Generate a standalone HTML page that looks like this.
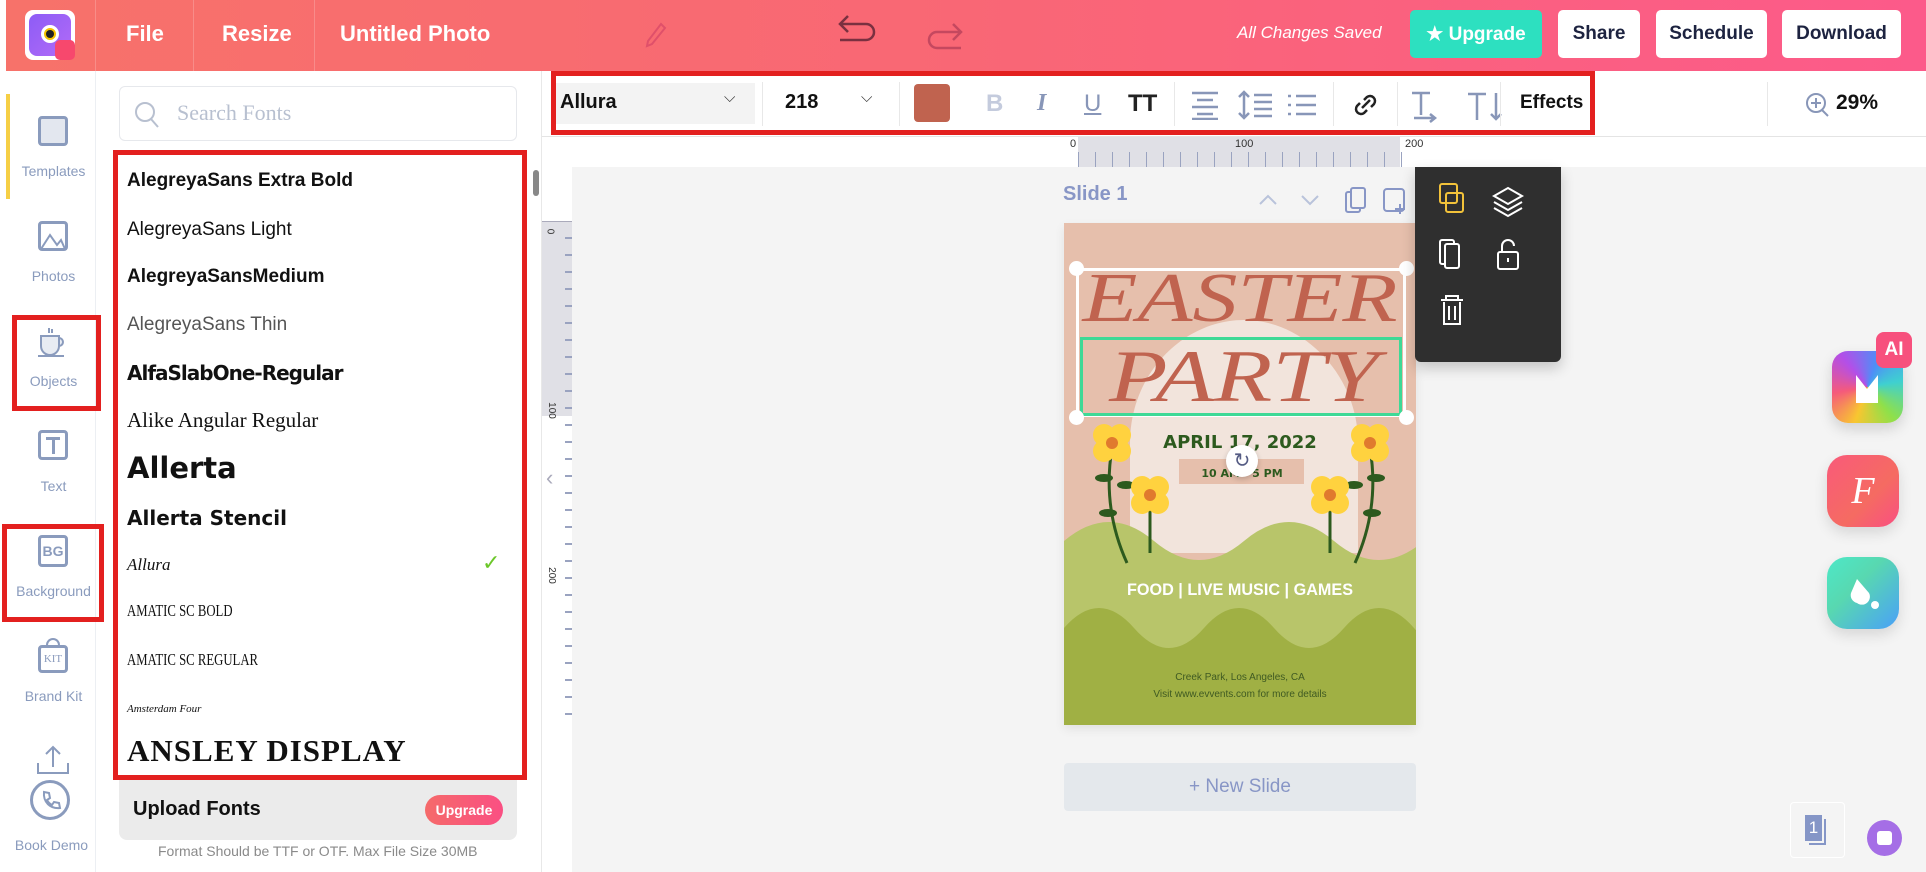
<!DOCTYPE html>
<html><head><meta charset="utf-8">
<style>
*{box-sizing:border-box;margin:0;padding:0}
body{width:1926px;height:872px;overflow:hidden;background:#fff;font-family:"Liberation Sans",sans-serif;position:relative}
.a{position:absolute}
.top{left:6px;top:0;width:1920px;height:71px;background:linear-gradient(90deg,#f7726a 0%,#f96775 50%,#fc5a8a 100%)}
.tb{color:#fff;font-weight:bold;font-size:22px;top:21px}
.btn{top:10px;height:48px;background:#fff;border-radius:5px;color:#1d2340;font-weight:bold;font-size:19px;display:flex;align-items:center;justify-content:center}
.side{color:#8a9bbd;font-size:14px;text-align:center;width:95px;left:6px}
.ic{border:3px solid #8a9bbd;border-radius:4px}
.f{left:127px;color:#111;white-space:nowrap}
.rb{border:5px solid #e3201f}
.ti{top:90px;font-size:24px;color:#8896b8}
</style></head><body>
<div class="a top"></div>
<div class="a" style="left:25px;top:10px;width:50px;height:50px;background:#fff;border-radius:8px"></div>
<div class="a" style="left:29px;top:14px;width:42px;height:42px;background:linear-gradient(135deg,#8d5cf6,#b26bf7);border-radius:8px"></div>
<div class="a" style="left:41px;top:25px;width:18px;height:18px;background:#f6c200;border-radius:50%;border:3px solid #fff"></div>
<div class="a" style="left:46px;top:30px;width:8px;height:8px;background:#222;border-radius:50%"></div>
<div class="a" style="left:55px;top:40px;width:20px;height:20px;background:#f7486d;border-radius:5px"></div>
<div class="a" style="left:95px;top:0;width:1px;height:71px;background:rgba(255,255,255,.2)"></div>
<div class="a" style="left:193px;top:0;width:1px;height:71px;background:rgba(255,255,255,.2)"></div>
<div class="a" style="left:314px;top:0;width:1px;height:71px;background:rgba(255,255,255,.2)"></div>
<div class="a tb" style="left:126px">File</div>
<div class="a tb" style="left:222px">Resize</div>
<div class="a tb" style="left:340px">Untitled Photo</div>
<svg class="a" style="left:645px;top:22px" width="22" height="26" viewBox="0 0 22 26"><path d="M16 2l4 4L7 22l-5 2 1-5z" fill="none" stroke="#e0506a" stroke-width="2"/></svg>
<svg class="a" style="left:836px;top:14px" width="44" height="32" viewBox="0 0 44 32"><path d="M4 10h26a8 8 0 010 16H4M12 2L4 10l8 8" fill="none" stroke="#7a3040" stroke-width="2.5"/></svg>
<svg class="a" style="left:925px;top:18px" width="44" height="32" viewBox="0 0 44 32"><path d="M36 14H12a8 8 0 000 16h24M28 6l8 8-8 8" fill="none" stroke="#c5485f" stroke-width="2.5"/></svg>
<div class="a" style="left:1237px;top:23px;color:#fff;font-style:italic;font-size:17px">All Changes Saved</div>
<div class="a btn" style="left:1410px;width:132px;background:#2de0c0;color:#fff">★&nbsp;Upgrade</div>
<div class="a btn" style="left:1558px;width:82px">Share</div>
<div class="a btn" style="left:1656px;width:111px">Schedule</div>
<div class="a btn" style="left:1782px;width:119px">Download</div>

<div class="a" style="left:95px;top:71px;width:1px;height:801px;background:#eceff3"></div>
<div class="a" style="left:6px;top:94px;width:4px;height:105px;background:#f6cf45"></div>
<div class="a ic" style="left:38px;top:116px;width:30px;height:30px;background:#e3e7ef"></div>
<div class="a side" style="top:163px">Templates</div>
<div class="a ic" style="left:38px;top:221px;width:30px;height:30px"></div>
<svg class="a" style="left:40px;top:228px" width="26" height="22"><path d="M1 21l9-14 7 10 4-5 4 9" fill="none" stroke="#8a9bbd" stroke-width="2"/></svg>
<div class="a side" style="top:268px">Photos</div>
<div class="a rb" style="left:12px;top:315px;width:89px;height:96px"></div>
<svg class="a" style="left:36px;top:326px" width="34" height="32"><path d="M5 10h18v10a9 9 0 01-18 0zM23 12a4 4 0 010 8M2 30h26M13 2v5M16 3v4" fill="#e8ecf3" stroke="#8a9bbd" stroke-width="2"/></svg>
<div class="a side" style="top:373px">Objects</div>
<div class="a ic" style="left:38px;top:430px;width:30px;height:30px"></div>
<div class="a" style="left:46px;top:437px;width:14px;height:3px;background:#8a9bbd"></div>
<div class="a" style="left:52px;top:437px;width:3px;height:17px;background:#8a9bbd"></div>
<div class="a side" style="top:478px">Text</div>
<div class="a rb" style="left:2px;top:524px;width:102px;height:98px"></div>
<div class="a ic" style="left:38px;top:535px;width:30px;height:32px;color:#8a9bbd;font-size:14px;font-weight:bold;text-align:center;line-height:26px">BG</div>
<div class="a side" style="top:583px">Background</div>
<div class="a ic" style="left:38px;top:645px;width:30px;height:28px;color:#8a9bbd;font-size:11px;text-align:center;line-height:22px;font-family:'Liberation Serif',serif">KIT</div>
<div class="a" style="left:46px;top:638px;width:14px;height:10px;border:2px solid #8a9bbd;border-bottom:none;border-radius:7px 7px 0 0"></div>
<div class="a side" style="top:688px">Brand Kit</div>
<svg class="a" style="left:36px;top:745px" width="34" height="30"><path d="M17 2v20M10 9l7-7 7 7M2 18v10h30V18" fill="none" stroke="#8a9bbd" stroke-width="2"/></svg>
<div class="a" style="left:30px;top:780px;width:40px;height:40px;border:3px solid #8a9bbd;border-radius:50%"></div>
<svg class="a" style="left:40px;top:790px" width="22" height="22"><path d="M4 2l5 1 1 5-3 2a11 11 0 005 5l2-3 5 1 1 5c-10 1-17-6-16-16z" fill="none" stroke="#8a9bbd" stroke-width="2"/></svg>
<div class="a side" style="top:837px;left:4px">Book Demo</div>

<div class="a" style="left:541px;top:71px;width:1px;height:801px;background:#e8e8e8"></div>
<div class="a" style="left:119px;top:86px;width:398px;height:55px;border:1px solid #e6e8ec;border-radius:6px"></div>
<svg class="a" style="left:133px;top:100px" width="28" height="30"><circle cx="12" cy="12" r="9" fill="none" stroke="#b8c0d0" stroke-width="2"/><path d="M18 19l7 8" stroke="#b8c0d0" stroke-width="2"/></svg>
<div class="a" style="left:177px;top:100px;font-size:22px;color:#b8c0d0;font-family:'Liberation Serif',serif">Search Fonts</div>
<div class="a rb" style="left:113px;top:150px;width:414px;height:630px"></div>
<div class="a" style="left:533px;top:170px;width:6px;height:26px;background:#888;border-radius:3px"></div>
<div class="a f" style="top:170px;font-size:19px;font-weight:bold">AlegreyaSans Extra Bold</div>
<div class="a f" style="top:219px;font-size:19px">AlegreyaSans Light</div>
<div class="a f" style="top:266px;font-size:19px;font-weight:bold">AlegreyaSansMedium</div>
<div class="a f" style="top:314px;font-size:19px;color:#555">AlegreyaSans Thin</div>
<div class="a f" style="top:361px;font-size:20px;font-weight:900;font-family:'DejaVu Sans',sans-serif;letter-spacing:-1px">AlfaSlabOne-Regular</div>
<div class="a f" style="top:408px;font-size:21px;font-family:'Liberation Serif',serif">Alike Angular Regular</div>
<div class="a f" style="top:451px;font-size:29px;font-weight:bold;font-family:'DejaVu Sans',sans-serif">Allerta</div>
<div class="a f" style="top:506px;font-size:20px;font-weight:bold;font-family:'DejaVu Sans',sans-serif">Allerta Stencil</div>
<div class="a f" style="top:555px;font-size:17px;font-style:italic;font-family:'Liberation Serif',serif">Allura</div>
<div class="a" style="left:482px;top:550px;color:#6cc72a;font-size:22px">✓</div>
<div class="a f" style="top:601px;font-size:17px;font-family:'Liberation Serif',serif;transform:scaleX(.75);transform-origin:left">AMATIC SC BOLD</div>
<div class="a f" style="top:650px;font-size:17px;font-family:'Liberation Serif',serif;transform:scaleX(.75);transform-origin:left">AMATIC SC REGULAR</div>
<div class="a f" style="top:703px;font-size:11px;font-style:italic;font-family:'Liberation Serif',serif">Amsterdam Four</div>
<div class="a f" style="top:733px;font-size:31px;font-weight:bold;font-family:'Liberation Serif',serif;letter-spacing:1px">ANSLEY DISPLAY</div>
<div class="a" style="left:119px;top:780px;width:398px;height:60px;background:#ebebeb;border-radius:0 0 8px 8px"></div>
<div class="a" style="left:133px;top:798px;font-size:20px;font-weight:bold;color:#111">Upload Fonts</div>
<div class="a" style="left:425px;top:795px;width:78px;height:30px;background:linear-gradient(90deg,#f56a6a,#fa4f83);border-radius:15px;color:#fff;font-size:14px;font-weight:bold;text-align:center;line-height:30px">Upgrade</div>
<div class="a" style="left:158px;top:843px;font-size:14px;color:#8a8a8a">Format Should be TTF or OTF. Max File Size 30MB</div>

<div class="a" style="left:572px;top:167px;width:1354px;height:705px;background:#f4f4f4"></div>
<div class="a" style="left:542px;top:136px;width:1384px;height:1px;background:#e4e4e4"></div>
<div class="a" style="left:542px;top:221px;width:30px;height:195px;background:#e0e0e6"></div>
<div class="a" style="left:542px;top:221px;width:30px;height:1px;background:#aab"></div>
<div class="a" style="left:547px;top:226px;font-size:10px;color:#333;transform:rotate(90deg)">0</div>
<div class="a" style="left:543px;top:405px;font-size:10px;color:#333;transform:rotate(90deg)">100</div>
<div class="a" style="left:543px;top:570px;font-size:10px;color:#333;transform:rotate(90deg)">200</div>
<div class="a" style="left:565px;top:222px;width:7px;height:500px;background:repeating-linear-gradient(180deg,transparent 0 15px,#9aa3c0 15px 17px)"></div>
<div class="a" style="left:546px;top:465px;color:#aab;font-size:22px">‹</div>
<div class="a" style="left:1064px;top:137px;width:18px;height:30px;background:#fff"></div>
<div class="a" style="left:1078px;top:137px;width:322px;height:30px;background:#e0e0e6"></div>
<div class="a" style="left:1078px;top:152px;width:330px;height:15px;background:repeating-linear-gradient(90deg,#9aa3c0 0 1px,transparent 1px 17px)"></div>
<div class="a" style="left:1070px;top:138px;font-size:11px;color:#333">0</div>
<div class="a" style="left:1235px;top:138px;font-size:11px;color:#333">100</div>
<div class="a" style="left:1405px;top:138px;font-size:11px;color:#333">200</div>
<div class="a" style="left:1063px;top:183px;font-size:20px;font-weight:bold;color:#8896c6">Slide 1</div>
<svg class="a" style="left:1258px;top:186px" width="160" height="30"><path d="M2 18l8-8 8 8M44 10l8 8 8-8" fill="none" stroke="#b9c3db" stroke-width="2"/><rect x="88" y="6" width="14" height="20" rx="2" fill="none" stroke="#8896c6" stroke-width="2"/><rect x="93" y="2" width="14" height="20" rx="2" fill="#f4f4f4" stroke="#8896c6" stroke-width="2"/><rect x="126" y="3" width="20" height="22" rx="3" fill="none" stroke="#8896c6" stroke-width="2"/><path d="M142 18v10M137 23h10" stroke="#8896c6" stroke-width="2"/></svg>

<svg class="a" style="left:1064px;top:223px;box-shadow:0 4px 10px rgba(0,0,0,.08)" width="352" height="502" viewBox="0 0 352 502">
<rect width="352" height="502" fill="#e6bfac"/>
<path d="M66 330V220C66 150 120 97 180 97s114 55 114 123v110z" fill="#f2e4dc"/>
<path d="M0 318 Q45 280 90 318 T180 318 T270 318 T360 318 V502 H0Z" fill="#b8c56a"/>
<path d="M0 405 Q35 365 70 405 T140 405 T210 405 T280 405 T350 405 T420 405 V502 H0Z" fill="#a0b044"/>
<text x="176" y="98" text-anchor="middle" font-family="Liberation Serif" font-style="italic" font-size="70" fill="#c0634f" textLength="315" lengthAdjust="spacingAndGlyphs">EASTER</text>
<text x="180" y="178" text-anchor="middle" font-family="Liberation Serif" font-style="italic" font-size="74" fill="#c0634f" textLength="270" lengthAdjust="spacingAndGlyphs">PARTY</text>
<text x="176" y="225" text-anchor="middle" font-family="DejaVu Sans" font-weight="bold" font-size="18" fill="#2d5a1e">APRIL 17, 2022</text>
<rect x="115" y="236" width="125" height="25" fill="#e6bfac"/>
<text x="178" y="254" text-anchor="middle" font-family="DejaVu Sans" font-weight="bold" font-size="11" fill="#2d5a1e">10 AM - 5 PM</text>
<g stroke="#2d5a1e" stroke-width="3" fill="none"><path d="M48 225q-10 60 15 115M306 225q10 60-15 115M86 280v50M266 280v50"/></g>
<g fill="#2d5a1e"><ellipse cx="40" cy="255" rx="9" ry="4"/><ellipse cx="62" cy="262" rx="9" ry="4"/><ellipse cx="44" cy="290" rx="9" ry="4"/><ellipse cx="312" cy="255" rx="9" ry="4"/><ellipse cx="290" cy="262" rx="9" ry="4"/><ellipse cx="308" cy="290" rx="9" ry="4"/></g>
<g fill="#ffd23f"><circle cx="40" cy="212" r="11"/><circle cx="56" cy="212" r="11"/><circle cx="40" cy="228" r="11"/><circle cx="56" cy="228" r="11"/><circle cx="78" cy="264" r="11"/><circle cx="94" cy="264" r="11"/><circle cx="78" cy="280" r="11"/><circle cx="94" cy="280" r="11"/><circle cx="298" cy="212" r="11"/><circle cx="314" cy="212" r="11"/><circle cx="298" cy="228" r="11"/><circle cx="314" cy="228" r="11"/><circle cx="258" cy="264" r="11"/><circle cx="274" cy="264" r="11"/><circle cx="258" cy="280" r="11"/><circle cx="274" cy="280" r="11"/></g>
<g fill="#e07a2e"><circle cx="48" cy="220" r="6"/><circle cx="86" cy="272" r="6"/><circle cx="306" cy="220" r="6"/><circle cx="266" cy="272" r="6"/></g>
<text x="176" y="372" text-anchor="middle" font-family="Liberation Sans" font-weight="bold" font-size="17" fill="#fff" textLength="226" lengthAdjust="spacingAndGlyphs">FOOD | LIVE MUSIC | GAMES</text>
<text x="176" y="457" text-anchor="middle" font-family="Liberation Sans" font-size="10" fill="#3f5a22">Creek Park, Los Angeles, CA</text>
<text x="176" y="474" text-anchor="middle" font-family="Liberation Sans" font-size="10" fill="#3f5a22">Visit www.evvents.com for more details</text>
</svg>
<div class="a" style="left:1076px;top:268px;width:330px;height:149px;border:3px solid #fff"></div>
<div class="a" style="left:1080px;top:337px;width:322px;height:79px;border:3px solid #3ed996"></div>
<div class="a" style="left:1069px;top:261px;width:15px;height:15px;background:#fff;border-radius:50%"></div>
<div class="a" style="left:1399px;top:261px;width:15px;height:15px;background:#fff;border-radius:50%"></div>
<div class="a" style="left:1069px;top:410px;width:15px;height:15px;background:#fff;border-radius:50%"></div>
<div class="a" style="left:1399px;top:410px;width:15px;height:15px;background:#fff;border-radius:50%"></div>
<div class="a" style="left:1226px;top:445px;width:32px;height:32px;background:#fff;border-radius:50%;box-shadow:0 2px 6px rgba(0,0,0,.2);color:#555c84;text-align:center;line-height:32px;font-size:20px">↻</div>
<div class="a" style="left:1415px;top:167px;width:146px;height:195px;background:#2f2f2f;border-radius:0 0 6px 6px;box-shadow:0 6px 14px rgba(0,0,0,.2)"></div>
<svg class="a" style="left:1436px;top:180px" width="110" height="150">
<rect x="4" y="4" width="17" height="19" rx="2" fill="none" stroke="#f2c23a" stroke-width="2"/><rect x="10" y="13" width="17" height="19" rx="2" fill="none" stroke="#f2c23a" stroke-width="2"/>
<path d="M72 8l14 8-14 8-14-8zM58 22l14 8 14-8M58 28l14 8 14-8" fill="none" stroke="#fff" stroke-width="2"/>
<rect x="4" y="60" width="14" height="24" rx="2" fill="none" stroke="#fff" stroke-width="2"/><rect x="9" y="64" width="14" height="24" rx="2" fill="#2f2f2f" stroke="#fff" stroke-width="2"/>
<rect x="62" y="72" width="20" height="17" rx="2" fill="none" stroke="#fff" stroke-width="2"/><path d="M66 72v-6a6 6 0 0112 0M72 78v4" fill="none" stroke="#fff" stroke-width="2"/>
<path d="M5 120h22M10 120v-4h12v4M8 122v22h16V122M13 126v14M19 126v14" fill="none" stroke="#fff" stroke-width="2"/>
</svg>
<div class="a" style="left:1064px;top:763px;width:352px;height:48px;background:#e4e8ec;border-radius:4px;color:#8896c6;font-size:19px;text-align:center;line-height:48px">+ New Slide</div>

<div class="a rb" style="left:551px;top:71px;width:1044px;height:64px"></div>
<div class="a" style="left:556px;top:83px;width:199px;height:41px;background:#f3f3f3"></div>
<div class="a" style="left:560px;top:91px;font-size:20px;font-weight:bold;color:#111">Allura</div>
<div class="a" style="left:724px;top:89px;font-size:15px;color:#333">⌵</div>
<div class="a" style="left:762px;top:82px;width:1px;height:44px;background:#e8e8e8"></div>
<div class="a" style="left:785px;top:91px;font-size:20px;font-weight:bold;color:#111">218</div>
<div class="a" style="left:861px;top:89px;font-size:15px;color:#333">⌵</div>
<div class="a" style="left:899px;top:82px;width:1px;height:44px;background:#e8e8e8"></div>
<div class="a" style="left:914px;top:84px;width:36px;height:38px;background:#c0634f;border-radius:4px"></div>
<div class="a ti" style="left:986px;font-weight:bold;color:#c4cbdd">B</div>
<div class="a ti" style="left:1037px;font-style:italic;font-weight:bold;font-family:'Liberation Serif',serif">I</div>
<div class="a ti" style="left:1084px;text-decoration:underline">U</div>
<div class="a ti" style="left:1128px;font-weight:bold;color:#222">TT</div>
<div class="a" style="left:1174px;top:82px;width:1px;height:44px;background:#e8e8e8"></div>
<svg class="a" style="left:1190px;top:90px" width="150" height="30" stroke="#8896b8" stroke-width="2.5" fill="none"><path d="M2 3h26M7 10h16M2 17h26M7 24h16M2 29h26"/><path d="M54 2v26M49 7l5-5 5 5M49 23l5 5 5-5M64 5h18M64 12h18M64 19h18M64 26h18"/><path d="M98 6h3M98 15h3M98 24h3M106 6h20M106 15h20M106 24h20"/></svg>
<div class="a" style="left:1333px;top:82px;width:1px;height:44px;background:#e8e8e8"></div>
<svg class="a" style="left:1352px;top:92px" width="28" height="26" fill="none" stroke="#222" stroke-width="2.5"><path d="M12 8l3-3a5 5 0 017 7l-3 3M15 18l-3 3a5 5 0 01-7-7l3-3M10 16l8-8"/></svg>
<div class="a" style="left:1397px;top:82px;width:1px;height:44px;background:#e8e8e8"></div>
<svg class="a" style="left:1408px;top:90px" width="110" height="34" fill="none" stroke="#8896b8" stroke-width="2.5"><path d="M4 3h18M13 3v22M6 28h20M22 24l5 4-5 4"/><path d="M60 4h18M69 4v26M88 3v26M83 24l5 5 5-5"/></svg>
<div class="a" style="left:1500px;top:82px;width:1px;height:44px;background:#e8e8e8"></div>
<div class="a" style="left:1520px;top:92px;font-size:19px;font-weight:bold;color:#111">Effects</div>
<div class="a" style="left:1767px;top:82px;width:1px;height:44px;background:#e8e8e8"></div>
<svg class="a" style="left:1805px;top:92px" width="26" height="26" fill="none" stroke="#8896b8" stroke-width="2"><circle cx="11" cy="11" r="9"/><path d="M17 18l6 6M11 6v10M6 11h10"/></svg>
<div class="a" style="left:1836px;top:91px;font-size:21px;font-weight:bold;color:#111">29%</div>

<div class="a" style="left:1832px;top:351px;width:71px;height:72px;border-radius:16px;background:conic-gradient(from 200deg,#f8c630,#f55a7b,#b34fe8,#4d8ff7,#3fd0d0,#8fe04a,#f8c630);box-shadow:0 6px 14px rgba(0,0,0,.15)"></div>
<div class="a" style="left:1856px;top:375px;width:22px;height:28px;background:#fff;clip-path:polygon(0 100%,0 0,50% 50%,100% 0,100% 100%)"></div>
<div class="a" style="left:1876px;top:332px;width:36px;height:36px;background:#f7507d;border-radius:8px;color:#fff;font-weight:bold;font-size:19px;text-align:center;line-height:36px">AI</div>
<div class="a" style="left:1827px;top:455px;width:72px;height:72px;border-radius:20px;background:linear-gradient(135deg,#f95a7a,#f56b62 60%,#f94f82);color:#fff;font-size:38px;font-style:italic;font-family:'Liberation Serif',serif;text-align:center;line-height:72px;box-shadow:0 6px 14px rgba(0,0,0,.12)">F</div>
<div class="a" style="left:1827px;top:557px;width:72px;height:72px;border-radius:20px;background:linear-gradient(135deg,#4de8c8,#58d8b0 40%,#4aa0f8);box-shadow:0 6px 14px rgba(0,0,0,.12)"></div>
<svg class="a" style="left:1845px;top:575px" width="40" height="40"><path d="M12 4l12 14a8 8 0 01-12 10 8 8 0 01-6-10z" fill="#fff"/><circle cx="30" cy="30" r="4" fill="#fff"/></svg>
<div class="a" style="left:1790px;top:802px;width:55px;height:56px;border:1px solid #fff;border-radius:4px"></div>
<div class="a" style="left:1805px;top:815px;width:17px;height:26px;background:#8596c7;color:#fff;font-size:17px;text-align:center;line-height:26px;box-shadow:3px 3px 0 -1px #f4f4f4,4px 4px 0 0 #8596c7">1</div>
<div class="a" style="left:1867px;top:820px;width:35px;height:36px;border-radius:50%;background:#a56ee6"></div>
<div class="a" style="left:1877px;top:831px;width:15px;height:14px;border-radius:3px;background:#fff"></div>
</body></html>
